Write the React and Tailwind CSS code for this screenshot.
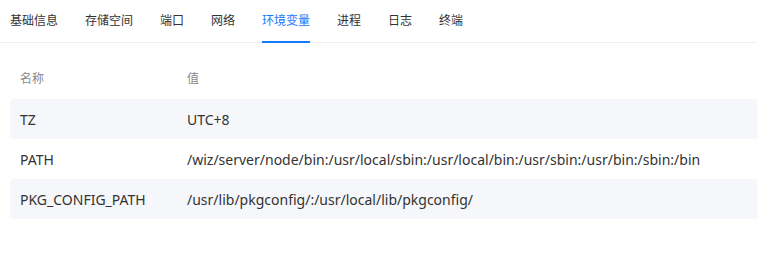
import React from 'react';

const tabs = ['基础信息', '存储空间', '端口', '网络', '环境变量', '进程', '日志', '终端'];

const envs = [
  { name: 'TZ', value: 'UTC+8' },
  { name: 'PATH', value: '/wiz/server/node/bin:/usr/local/sbin:/usr/local/bin:/usr/sbin:/usr/bin:/sbin:/bin' },
  { name: 'PKG_CONFIG_PATH', value: '/usr/lib/pkgconfig/:/usr/local/lib/pkgconfig/' },
];

export default function App() {
  return (
    <div
      className="w-[757px] h-[255px] bg-white text-[#333]"
      style={{ fontFamily: '"Noto Sans", "Noto Sans CJK SC", sans-serif' }}
    >
      <div className="flex h-[43px] border-b border-[#eceef1] pl-[10px] gap-[27px]">
        {tabs.map((t) => {
          const active = t === '环境变量';
          return (
            <div
              key={t}
              className={`relative flex items-center text-[12px] ${active ? 'text-[#1677ff]' : 'text-[#333]'}`}
            >
              {t}
              {active && <div className="absolute left-0 right-0 bottom-[-1px] h-[2px] bg-[#1677ff]" />}
            </div>
          );
        })}
      </div>

      <div className="pt-[16px] pl-[10px]">
        <div className="flex h-[40px] items-center text-[12px] text-[#888]">
          <div className="w-[177px] pl-[10px]">名称</div>
          <div>值</div>
        </div>
        {envs.map((e, i) => (
          <div
            key={e.name}
            className={`flex h-[40px] items-center text-[14px] rounded-l-[4px] ${i % 2 === 0 ? 'bg-[#f5f7fa]' : ''}`}
          >
            <div className="w-[177px] pl-[10px]">{e.name}</div>
            <div className="whitespace-nowrap">{e.value}</div>
          </div>
        ))}
      </div>
    </div>
  );
}
